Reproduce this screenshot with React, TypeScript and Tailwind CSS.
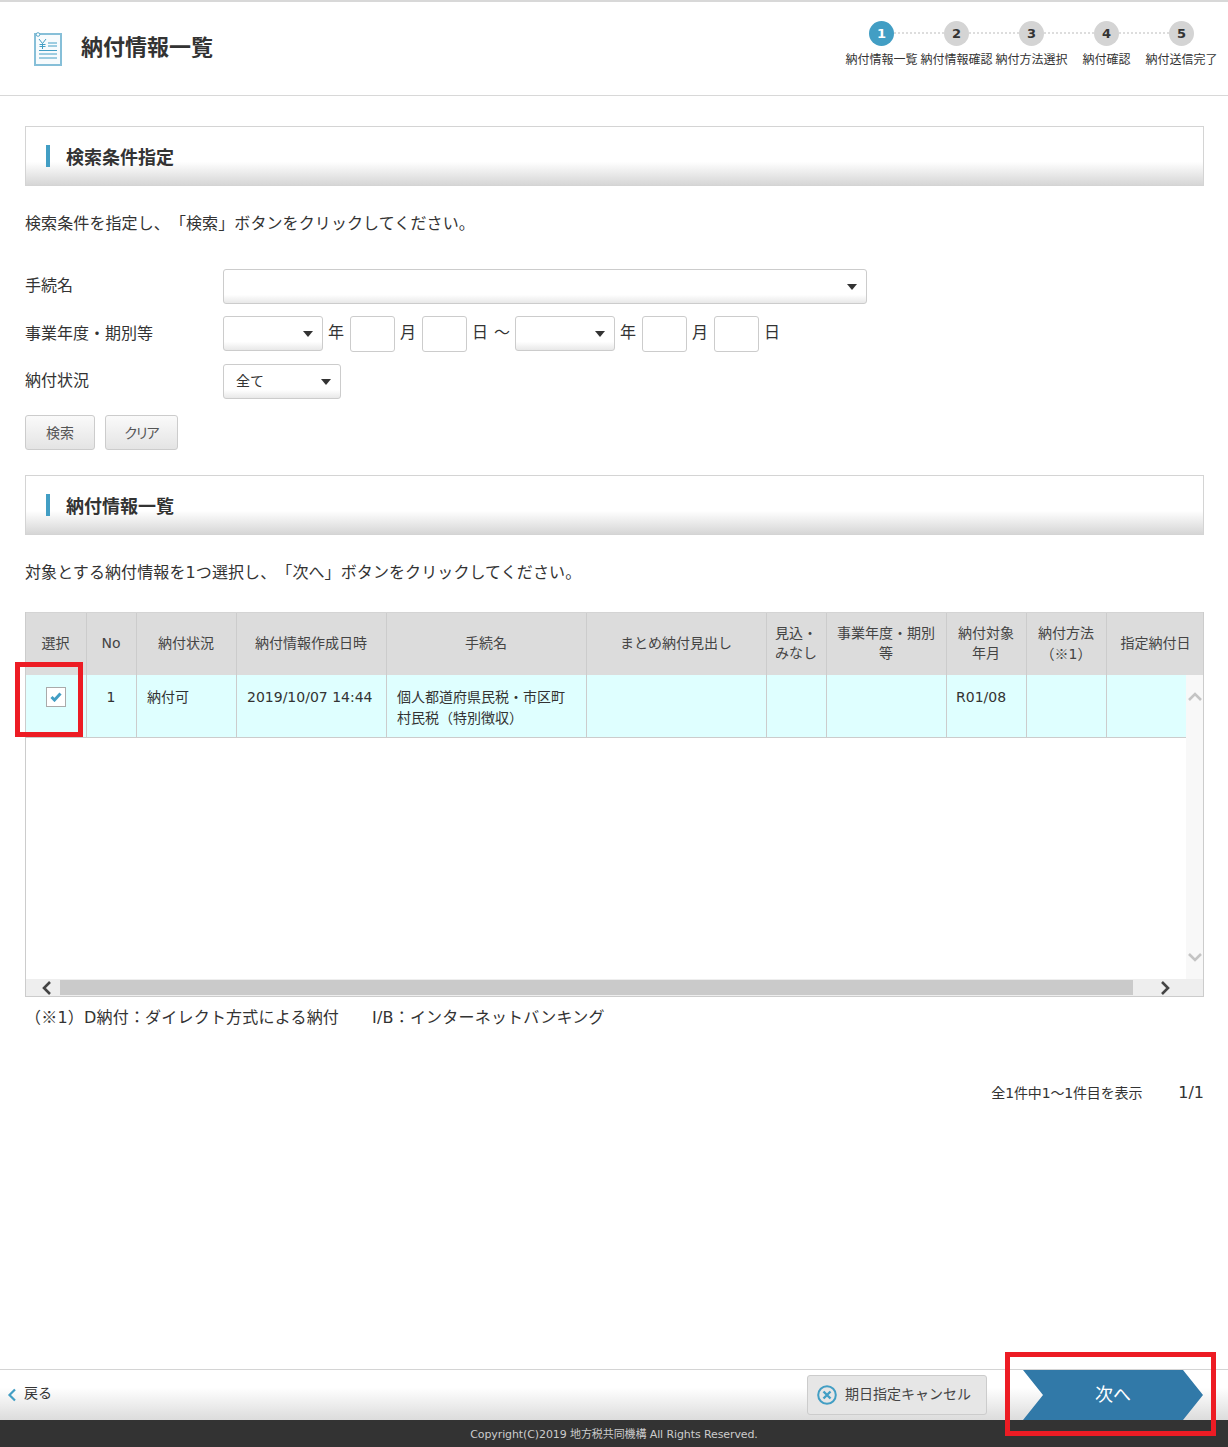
import { ReactNode } from "react";

const FONT = "font-['DejaVu_Sans','Noto_Sans_CJK_JP',sans-serif] [text-spacing-trim:space-all]";

const STEPS = ["納付情報一覧", "納付情報確認", "納付方法選択", "納付確認", "納付送信完了"];

const COLUMNS = "grid-cols-[61px_50px_100px_150px_200px_180px_60px_120px_80px_80px_98px]";
const ROW_COLUMNS = "grid-cols-[61px_50px_100px_150px_200px_180px_60px_120px_80px_80px]";

// ※ is narrow in DejaVu, so it has to come from the CJK face
const Kome = () => <span className="font-['Noto_Sans_CJK_JP',sans-serif]">※</span>;

const HEADERS: ReactNode[] = [
  "選択",
  "No",
  "納付状況",
  "納付情報作成日時",
  "手続名",
  "まとめ納付見出し",
  "見込・\nみなし",
  "事業年度・期別\n等",
  "納付対象\n年月",
  <>
    納付方法{"\n"}（<Kome />1）
  </>,
  "指定納付日",
];

function SectionTitle({ children }: { children: ReactNode }) {
  return (
    <div className="flex h-[60px] items-center border border-[#d4d4d4] bg-[linear-gradient(#fff_0,#fff_60%,#d6d6d6_100%)] pl-5">
      <span className="h-[22px] w-1 bg-[#429ec4]" />
      <h2 className="ml-4 pt-[2px] text-[18px] font-bold text-[#333]">{children}</h2>
    </div>
  );
}

function Select({ width, label }: { width: string; label?: string }) {
  return (
    <div className={`${width} flex h-[35px] items-center justify-between self-start rounded-[3px] border border-[#ccc] bg-[linear-gradient(#fff_0,#fff_75%,#e8e8e8_100%)] pr-[9px] pl-3`}>
      <span className="text-[14px] text-[#333]">{label}</span>
      <span className="h-0 w-0 border-x-[5px] border-t-[6px] border-x-transparent border-t-[#333]" />
    </div>
  );
}

function DateInput() {
  return <div className="h-9 w-[45px] rounded-[3px] border border-[#ccc] bg-white" />;
}

function FormLabel({ children, className = "" }: { children: ReactNode; className?: string }) {
  return <div className={`w-[198px] text-[16px] text-[#333] ${className}`}>{children}</div>;
}

function Unit({ children, className }: { children: ReactNode; className: string }) {
  return <span className={`text-[16px] text-[#333] ${className}`}>{children}</span>;
}

function GrayButton({ width, children }: { width: string; children: ReactNode }) {
  return (
    <div className={`${width} flex h-[35px] items-center justify-center rounded-[3px] border border-[#ccc] bg-[linear-gradient(#fafafa,#e4e4e4)] pt-[2px] text-[14px] text-[#555] [font-feature-settings:'palt']`}>
      {children}
    </div>
  );
}

function Chevron({ dir, color }: { dir: "up" | "down" | "left" | "right"; color: string }) {
  const paths = {
    up: "M2 10 L8 4 L14 10",
    down: "M2 5 L8 11 L14 5",
    left: "M11 2 L5 8 L11 14",
    right: "M5 2 L11 8 L5 14",
  };
  return (
    <svg width="16" height="16" viewBox="0 0 16 16" fill="none">
      <path d={paths[dir]} stroke={color} strokeWidth="2.6" />
    </svg>
  );
}

function DocIcon() {
  return (
    <svg width="28" height="34" viewBox="0 0 28 34" fill="none">
      <rect x="1" y="2" width="26" height="31" fill="#f7fbfd" stroke="#86bfd8" strokeWidth="2" />
      <circle cx="4" cy="2.5" r="1.8" fill="#fff" stroke="#5aa8c8" strokeWidth="1" />
      <path d="M5 7 L8.5 11.5 L12 7 M8.5 11.5 V17 M5.5 12.5 H11.5 M5.5 14.5 H11.5" stroke="#429ec4" strokeWidth="1" />
      <path d="M14 11 H23 M14 14 H23 M5 18.5 H23 M5 22 H23 M5 26 H23" stroke="#429ec4" strokeWidth="1" />
    </svg>
  );
}

export default function App() {
  return (
    <div className={`${FONT} relative flex h-[1447px] w-[1228px] flex-col overflow-hidden bg-white text-[#333]`}>
      {/* header */}
      <header className="flex h-[96px] shrink-0 items-start justify-between border-t-2 border-b border-[#d8d8d8]">
        <div className="flex items-start pt-[30px] pl-[34px]">
          <DocIcon />
          <h1 className="ml-[19px] -mt-[1px] text-[22px] leading-[33px] font-bold text-[#333]">納付情報一覧</h1>
        </div>
        <ol className="mr-[9px] flex pt-[19px]">
          {STEPS.map((label, i) => (
            <li key={label} className="relative flex w-[75px] flex-col items-center">
              {i < STEPS.length - 1 && (
                <span className="absolute top-[11px] left-[37px] w-[75px] border-t-2 border-dotted border-[#ddd]" />
              )}
              <span
                className={`relative flex h-[25px] w-[25px] items-center justify-center rounded-full text-[13px] font-bold ${
                  i === 0 ? "bg-[#429ec4] text-white" : "bg-[#d4d4d4] text-[#333]"
                }`}
              >
                {i + 1}
              </span>
              <span className="mt-[5px] text-[12px] leading-[18px] whitespace-nowrap text-[#333]">{label}</span>
            </li>
          ))}
        </ol>
      </header>

      {/* main */}
      <main className="flex-1 pt-[30px] pr-[24px] pl-[25px]">
        <SectionTitle>検索条件指定</SectionTitle>
        <p className="mt-[26px] text-[16px] leading-6 tracking-[0.1px]">検索条件を指定し、「検索」ボタンをクリックしてください。</p>

        <div className="mt-[33px] flex items-center">
          <FormLabel className="-mt-[2px]">手続名</FormLabel>
          <Select width="w-[644px]" />
        </div>
        <div className="mt-[12px] flex items-center">
          <FormLabel>事業年度・期別等</FormLabel>
          <Select width="w-[100px]" />
          <Unit className="mr-[6px] ml-[5px] -mt-[2px] w-[16px]">年</Unit>
          <DateInput />
          <Unit className="mx-[5px] -mt-[2px] w-[17px]">月</Unit>
          <DateInput />
          <Unit className="ml-[5px] -mt-[2px] w-[22px]">日</Unit>
          <Unit className="-mt-[2px] w-[21px]">～</Unit>
          <Select width="w-[100px]" />
          <Unit className="mr-[6px] ml-[5px] -mt-[2px] w-[16px]">年</Unit>
          <DateInput />
          <Unit className="mx-[5px] -mt-[2px] w-[17px]">月</Unit>
          <DateInput />
          <Unit className="ml-[5px] -mt-[2px] w-[16px]">日</Unit>
        </div>
        <div className="mt-[12px] flex items-center">
          <FormLabel className="-mt-[2px]">納付状況</FormLabel>
          <Select width="w-[118px]" label="全て" />
        </div>
        <div className="mt-[16px] flex gap-[10px]">
          <GrayButton width="w-[70px]">検索</GrayButton>
          <GrayButton width="w-[73px]">
            <span className="tracking-[-1px]">クリア</span>
          </GrayButton>
        </div>

        <div className="mt-[25px]">
          <SectionTitle>納付情報一覧</SectionTitle>
        </div>
        <p className="mt-[26px] text-[16px] leading-6 tracking-[0.1px]">対象とする納付情報を1つ選択し、「次へ」ボタンをクリックしてください。</p>

        {/* table */}
        <div className="mt-[27px] h-[385px] w-[1179px] overflow-hidden border-x border-b border-[#ccc]">
          <div className={`grid h-[63px] w-[1179px] ${COLUMNS} border-t border-[#d4d4d4] bg-[#dcdcdc]`}>
            {HEADERS.map((h, i) => (
              <div
                key={i}
                className="flex items-center justify-center border-r border-[#ccc] pr-[1px] pb-[2px] text-center text-[14px] leading-[20px] whitespace-pre-line text-[#444] last:border-r-0"
              >
                <div>{h}</div>
              </div>
            ))}
          </div>
          <div className="flex h-[304px]">
            <div className="w-[1160px] overflow-hidden">
              <div className={`grid h-[63px] w-[1161px] ${ROW_COLUMNS} border-b border-[#ccc] bg-[#dfffff] text-[14px] leading-[21px] text-[#333]`}>
                <div className="flex justify-center border-r border-[#ccc] pt-[12px]">
                  <span className="flex h-5 w-5 items-center justify-center border border-[#aaa] bg-white">
                    <svg width="12" height="10" viewBox="0 0 12 10" fill="none">
                      <path d="M1.5 5 L4.5 8 L10.5 1.5" stroke="#429ec4" strokeWidth="3" />
                    </svg>
                  </span>
                </div>
                <div className="border-r border-[#ccc] pt-[12px] pr-[1px] text-center">1</div>
                <div className="border-r border-[#ccc] pt-[12px] pl-[10px]">納付可</div>
                <div className="border-r border-[#ccc] pt-[12px] pl-[10px] whitespace-nowrap">2019/10/07 14:44</div>
                <div className="border-r border-[#ccc] pt-[12px] pr-[10px] pl-[10px]">個人都道府県民税・市区町村民税（特別徴収）</div>
                <div className="border-r border-[#ccc]" />
                <div className="border-r border-[#ccc]" />
                <div className="border-r border-[#ccc]" />
                <div className="border-r border-[#ccc] pt-[12px] pl-[9px]">R01/08</div>
                <div className="border-r border-[#ccc]" />
              </div>
            </div>
            <div className="flex w-[17px] flex-col items-center justify-between bg-[#f8f8f8] pt-[15px] pb-[14px]">
              <Chevron dir="up" color="#c4c4c4" />
              <Chevron dir="down" color="#c4c4c4" />
            </div>
          </div>
          <div className="flex h-[17px] items-center bg-[#eee]">
            <div className="flex w-[34px] justify-center pl-[8px]">
              <Chevron dir="left" color="#444" />
            </div>
            <div className="h-[15px] w-[1073px] bg-[#cacaca]" />
            <div className="flex w-[64px] justify-center">
              <Chevron dir="right" color="#444" />
            </div>
          </div>
        </div>

        <p className="mt-[7px] text-[16px] leading-6 tracking-[0.2px] whitespace-pre">
          （<Kome />1）D納付：ダイレクト方式による納付<span className="ml-[33px]">I/B：インターネットバンキング</span>
        </p>

        <div className="mt-[51px] flex items-center justify-end">
          <span className="text-[14px] tracking-[-0.15px] text-[#333]">全1件中1～1件目を表示</span>
          <span className="ml-[36px] text-[16px] text-[#333]">1/1</span>
        </div>
      </main>

      {/* bottom bar */}
      <div className="flex h-[51px] shrink-0 items-center border-t border-[#d4d4d4] bg-[linear-gradient(#fff_0,#fff_35%,#dcdcdc_100%)]">
        <svg className="ml-[7px]" width="10" height="14" viewBox="0 0 10 14" fill="none">
          <path d="M8 1.5 L2.5 7 L8 12.5" stroke="#429ec4" strokeWidth="2.2" />
        </svg>
        <span className="mb-[3px] ml-[7px] text-[14px] text-[#333]">戻る</span>
        <div className="ml-auto flex h-10 w-[180px] items-center rounded-[3px] border border-[#ccc] bg-[#e6e6e6] pl-[9px]">
          <svg width="20" height="20" viewBox="0 0 20 20" fill="none">
            <circle cx="10" cy="10" r="8.8" stroke="#429ec4" strokeWidth="2" />
            <path d="M6.5 6.5 L13.5 13.5 M13.5 6.5 L6.5 13.5" stroke="#429ec4" strokeWidth="2.4" />
          </svg>
          <span className="mb-[2px] ml-[8px] text-[14px] whitespace-nowrap text-[#444]">期日指定キャンセル</span>
        </div>
        <div className="mr-[25px] ml-[36px] flex h-full w-[180px] items-center justify-center bg-[#3179a8] pb-[2px] text-[18px] text-white [clip-path:polygon(0_0,160px_0,180px_50%,160px_100%,0_100%,20px_50%)]">
          次へ
        </div>
      </div>

      {/* footer */}
      <footer className="flex h-[27px] shrink-0 items-center justify-center bg-[#333] pt-[4px] text-[11px] tracking-[-0.1px] text-[#ccc]">
        Copyright(C)2019 地方税共同機構 All Rights Reserved.
      </footer>

      {/* red annotation frames */}
      <div className="pointer-events-none absolute top-[662px] left-[15px] h-[75px] w-[68px] border-[5px] border-[#ed1c24]" />
      <div className="pointer-events-none absolute top-[1352px] left-[1005px] h-[84px] w-[211px] border-[5px] border-[#ed1c24]" />
    </div>
  );
}
